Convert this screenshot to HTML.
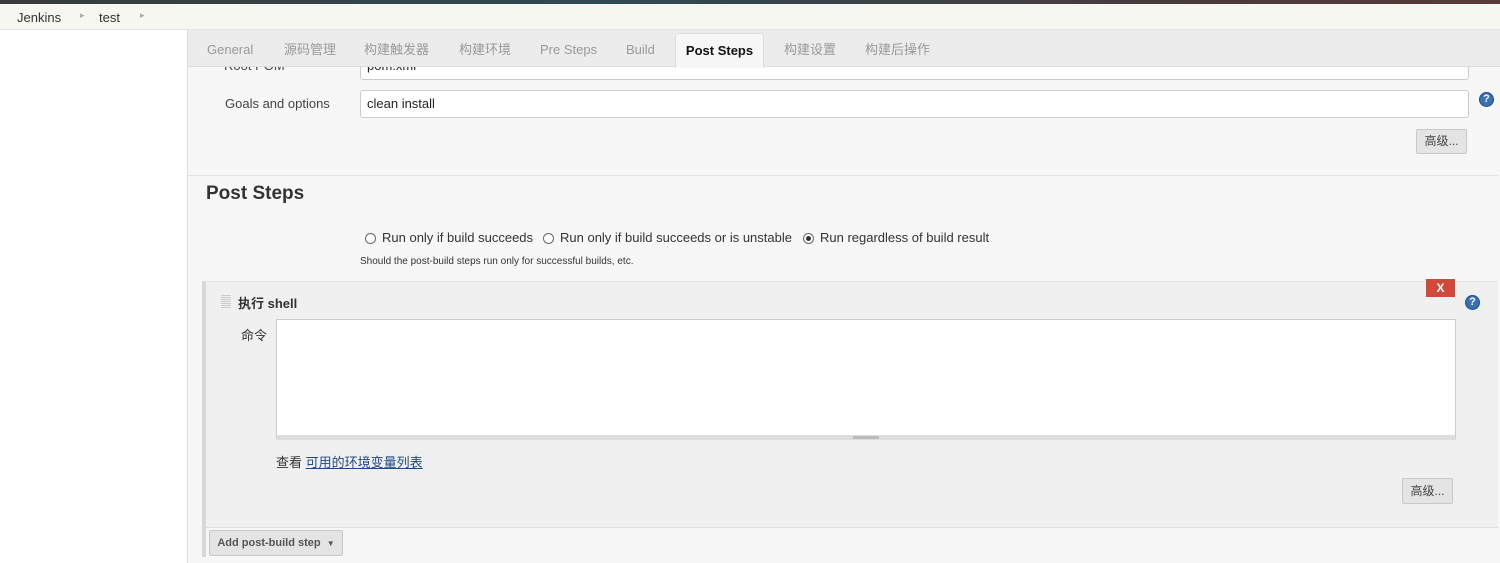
<!DOCTYPE html><html><head><meta charset="utf-8"><style>
*{box-sizing:border-box;margin:0;padding:0}
body{width:1500px;height:563px;overflow:hidden;background:#fff;font-family:"Liberation Sans","Noto Sans CJK SC",sans-serif;font-size:13px;color:#333;position:relative}
.a{position:absolute}
.top{left:0;top:0;width:1500px;height:4px;background:linear-gradient(90deg,#3a3a3a,#2f4a55 40%,#4a3a3a 80%,#5a3a3a)}
.bc{left:0;top:4px;width:1500px;height:26px;background:#f7f7f2;border-bottom:1px solid #e4e4e4}
.main{left:187px;top:30px;width:1313px;height:533px;background:#f7f7f7;border-left:1px solid #ddd}
.tabs{left:188px;top:30px;width:1312px;height:37px;background:#ececec;border-bottom:1px solid #ddd}
.tab{position:absolute;top:10px;height:20px;line-height:20px;color:#999;font-size:13px}
.inp{background:#fff;border:1px solid #ccc;border-radius:3px;font-size:13px;padding:0 6px;color:#222}
.btn{background:#e4e4e4;border:1px solid #c8c8c8;border-radius:2px;font-size:12px;color:#444;text-align:center}
.help{width:15px;height:15px;border-radius:50%;background:#3a6fb0;border:1px solid #1f4f8a;color:#fff;font-size:11px;font-weight:bold;text-align:center;line-height:13px}
.rad{width:11px;height:11px;border:1px solid #666;border-radius:50%;background:#fff}
</style></head><body>
<div class="a top"></div>
<div class="a bc"><span class="a" style="left:17px;top:6px">Jenkins</span><span class="a" style="left:80px;top:6px;color:#aaa;font-size:9px">▸</span><span class="a" style="left:99px;top:6px">test</span><span class="a" style="left:140px;top:6px;color:#aaa;font-size:9px">▸</span></div>
<div class="a main"></div>
<div class="a inp" style="left:360px;top:58px;width:1109px;height:22px;line-height:14px">pom.xml</div>
<span class="a" style="left:224px;top:58px;color:#444">Root POM</span>
<div class="a tabs">
<span class="tab" style="left:19px">General</span><span class="tab" style="left:96px">源码管理</span><span class="tab" style="left:176px">构建触发器</span><span class="tab" style="left:271px">构建环境</span><span class="tab" style="left:352px">Pre Steps</span><span class="tab" style="left:438px">Build</span><span class="tab" style="left:596px">构建设置</span><span class="tab" style="left:677px">构建后操作</span>
<div class="a" style="left:487px;top:3px;width:89px;height:35px;background:#f7f7f7;border:1px solid #ddd;border-bottom:none;border-radius:3px 3px 0 0;font-weight:bold;color:#111;text-align:center;line-height:33px">Post Steps</div>
</div>
<span class="a" style="left:225px;top:96px;color:#444">Goals and options</span>
<div class="a inp" style="left:360px;top:90px;width:1109px;height:28px;line-height:26px">clean install</div>
<div class="a help" style="left:1479px;top:92px">?</div>
<div class="a btn" style="left:1416px;top:129px;width:51px;height:25px;line-height:23px">高级...</div>
<div class="a" style="left:188px;top:175px;width:1310px;height:1px;background:#e2e2e2"></div>
<div class="a" style="left:206px;top:183px;font-size:19px;font-weight:bold;color:#333">Post Steps</div>
<div class="a rad" style="left:365px;top:233px"></div><span class="a" style="left:382px;top:230px">Run only if build succeeds</span>
<div class="a rad" style="left:543px;top:233px"></div><span class="a" style="left:560px;top:230px">Run only if build succeeds or is unstable</span>
<div class="a rad" style="left:803px;top:233px"><div style="width:5px;height:5px;background:#333;border-radius:50%;margin:2px"></div></div><span class="a" style="left:820px;top:230px">Run regardless of build result</span>
<span class="a" style="left:360px;top:256px;font-size:10px;color:#333">Should the post-build steps run only for successful builds, etc.</span>
<div class="a" style="left:202px;top:281px;width:1296px;height:276px;background:#f0f0f0;border-left:4px solid #d8d8d8;border-top:1px solid #e0e0e0"></div>
<div class="a" style="left:206px;top:527px;width:1292px;height:30px;background:#f7f7f7;border-top:1px solid #ddd"></div>
<div class="a" style="left:221px;top:294px;width:10px;height:14px;background:repeating-linear-gradient(0deg,#ccc 0 1px,transparent 1px 2px),#f0f0f0"></div>
<span class="a" style="left:238px;top:293px;font-weight:bold">执行 shell</span>
<div class="a" style="left:1426px;top:279px;width:29px;height:18px;background:#d24939;color:#fff;font-size:12px;font-weight:bold;text-align:center;line-height:18px">X</div>
<div class="a help" style="left:1465px;top:295px">?</div>
<span class="a" style="left:241px;top:325px">命令</span>
<div class="a" style="left:276px;top:319px;width:1180px;height:121px;background:#fff;border:1px solid #ccc;border-bottom:5px solid #ddd"></div>
<div class="a" style="left:853px;top:436px;width:26px;height:3px;background:#bbb"></div>
<span class="a" style="left:276px;top:452px">查看 <span style="color:#204a87;text-decoration:underline">可用的环境变量列表</span></span>
<div class="a btn" style="left:1402px;top:478px;width:51px;height:26px;line-height:24px">高级...</div>
<div class="a btn" style="left:209px;top:530px;width:134px;height:26px;line-height:24px;font-weight:bold;color:#555;font-size:11px">Add post-build step &nbsp;<span style="font-size:8px">▼</span></div>
</body></html>
